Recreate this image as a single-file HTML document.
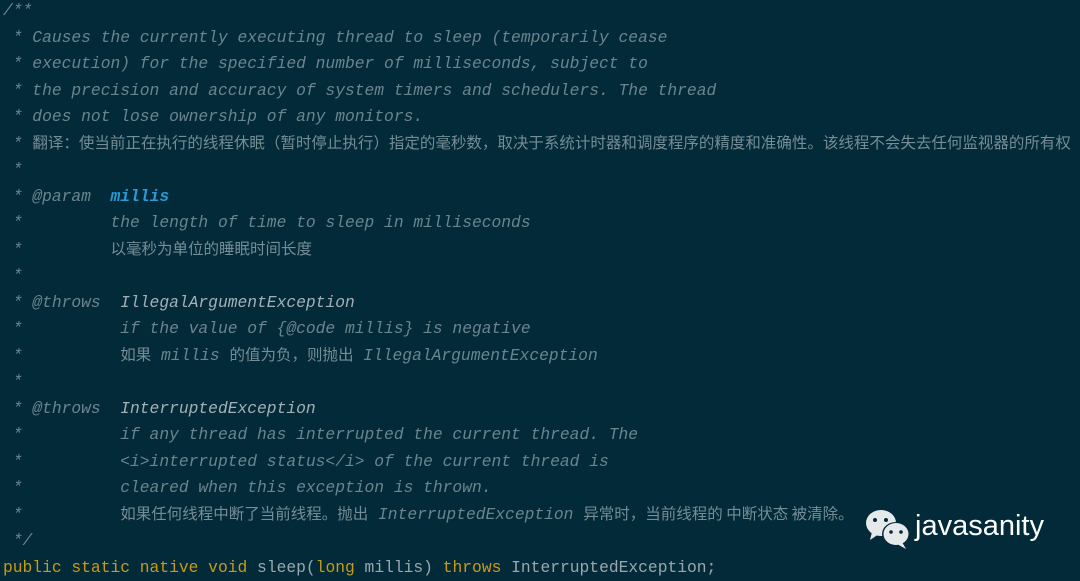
<!DOCTYPE html>
<html><head><meta charset="utf-8"><style>
html,body{margin:0;padding:0;}
body{width:1080px;height:579px;background:#022a39;overflow:hidden;position:relative;}
pre{position:absolute;left:3px;top:-2px;margin:0;font-family:"Liberation Mono","Noto Sans CJK SC",monospace;font-size:16.3px;line-height:26.5px;color:#6b858e;white-space:pre;}
.i{font-style:italic}
.c{font-family:"Noto Sans CJK SC","WenQuanYi Zen Hei",sans-serif;font-size:15.5px;font-style:normal;color:#758d95;line-height:0;}
.p{color:#2b9ad4;font-weight:bold;font-style:italic}
.t{color:#a3b1b6;font-style:italic}
.k{color:#c99a16}
.n{color:#9aa8ad}
.logo{position:absolute;left:864px;top:508px;}
.lt{position:absolute;left:915px;top:510px;font-family:"Liberation Sans",sans-serif;font-size:29px;color:#fff;}
</style></head><body>
<pre><span class="i">/**
 * Causes the currently executing thread to sleep (temporarily cease
 * execution) for the specified number of milliseconds, subject to
 * the precision and accuracy of system timers and schedulers. The thread
 * does not lose ownership of any monitors.
 * <span class="c">翻译：使当前正在执行的线程休眠（暂时停止执行）指定的毫秒数，取决于系统计时器和调度程序的精度和准确性。该线程不会失去任何监视器的所有权</span>
 *
 * @param  <span class="p">millis</span>
 *         the length of time to sleep in milliseconds
 *         <span class="c">以毫秒为单位的睡眠时间长度</span>
 *
 * @throws  <span class="t">IllegalArgumentException</span>
 *          if the value of {@code millis} is negative
 *          <span class="c">如果</span> millis <span class="c">的值为负，则抛出</span> IllegalArgumentException
 *
 * @throws  <span class="t">InterruptedException</span>
 *          if any thread has interrupted the current thread. The
 *          &lt;i&gt;interrupted status&lt;/i&gt; of the current thread is
 *          cleared when this exception is thrown.
 *          <span class="c">如果任何线程中断了当前线程。抛出</span> InterruptedException <span class="c">异常时，当前线程的 中断状态 被清除。</span>
 */</span>
<span class="k">public static native void</span> <span class="n">sleep(</span><span class="k">long</span> <span class="n">millis)</span> <span class="k">throws</span> <span class="n">InterruptedException;</span></pre>
<svg class="logo" width="50" height="42" viewBox="0 0 50 42">
<ellipse cx="17" cy="15" rx="15" ry="13" fill="#e6e9ea"/>
<path d="M8 24 L6 32 L15 26Z" fill="#e6e9ea"/>
<ellipse cx="32" cy="26" rx="14" ry="12" fill="#022a39"/>
<ellipse cx="32" cy="26" rx="12.5" ry="11" fill="#e6e9ea"/>
<path d="M38 34 L42 41 L33 36Z" fill="#e6e9ea"/>
<circle cx="11" cy="12" r="2" fill="#022a39"/><circle cx="22" cy="12" r="2" fill="#022a39"/>
<circle cx="27" cy="24" r="1.8" fill="#022a39"/><circle cx="37" cy="24" r="1.8" fill="#022a39"/>
</svg>
<div class="lt">javasanity</div>
</body></html>
